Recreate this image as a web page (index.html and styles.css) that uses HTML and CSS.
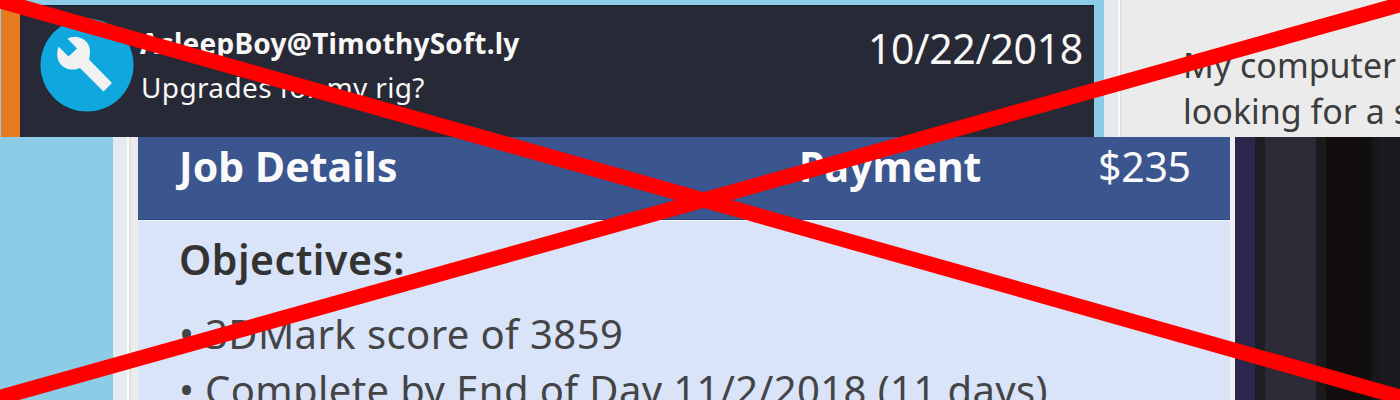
FILE: index.html
```
<!DOCTYPE html>
<html lang="en">
<head>
<meta charset="utf-8">
<title>Job Details</title>
<link rel="stylesheet" href="styles.css">
</head>
<body>
<div class="screen">
  <section class="mail">
    <div class="inbox">
      <article class="message">
        <svg class="avatar" viewBox="0 0 94 94" aria-hidden="true">
          <circle cx="47" cy="47" r="46.5" fill="#0ea8df"/>
          <path fill="#f1f1f2" d="M27.500 20.500C35 17.500 44 19 48 26C50.500 30.500 50.500 36 49 41.500L72 65L63.500 73.500L40 50C32 53.500 23 51 19 44C16.500 39 17 33 18.500 28.500L28.500 38.500L37 30.500Z"/>
        </svg>
        <div class="summary">
          <div class="sender"><span>AsleepBoy@TimothySoft.ly</span></div>
          <div class="subject"><span>Upgrades for my rig?</span></div>
        </div>
        <time class="date">10/22/2018</time>
      </article>
    </div>
    <div class="divider"></div>
    <div class="body-text">
      <div>My computer</div>
      <div>looking for a s</div>
    </div>
  </section>
  <section class="job">
    <div class="backdrop"></div>
    <div class="divider job-divider"></div>
    <div class="panel">
      <header class="job-header">
        <h2 class="job-title">Job Details</h2>
        <strong class="pay-label">Payment</strong>
        <span class="pay">$235</span>
      </header>
      <div class="details">
        <h3 class="objectives">Objectives:</h3>
        <div class="item"><span class="bullet">•</span><span class="score">3DMark score of 3859</span></div>
        <div class="item"><span class="bullet">•</span><span class="due">Complete by End of Day 11/2/2018 (11 days)</span></div>
      </div>
    </div>
    <div class="shadows"></div>
  </section>
  <svg class="cross" viewBox="0 0 1400 400" aria-hidden="true">
    <path d="M-20 -4.700L1420 402.700M-20 403.100L1420 -1.100" stroke="#f00" stroke-width="15.200" fill="none"/>
  </svg>
</div>
</body>
</html>
```
FILE: styles.css
```
* { box-sizing: border-box; }
body { margin: 0; font-family: "Noto Sans", "Open Sans", sans-serif; }
.screen {
  position: relative;
  display: grid;
  grid-template-rows: 136.5px 263.5px;
  width: 1400px;
  height: 400px;
  overflow: hidden;
  white-space: nowrap;
}
.mail { display: flex; overflow: hidden; background: #ebebeb; }
.inbox { flex: 0 0 1104px; padding: 5px 10px 0 1px; background: #8ccce6; }
.message {
  display: flex;
  height: 132px;
  padding-left: 20px;
  border-left: 19px solid #e67c1f;
  border-top: 1px solid #1b1b2b;
  background: #282936;
  color: #f7f7f5;
}
.avatar { flex: none; width: 94px; height: 94px; margin-top: 12px; }
.summary { flex: 1; padding: 15px 0 0 6px; }
.sender { font-size: 28px; line-height: 44px; font-weight: 700; letter-spacing: 0.26px; }
.subject { padding-left: 1px; font-size: 28px; line-height: 44px; letter-spacing: 0.36px; }
.date { font-size: 41px; line-height: 50px; padding: 17px 11px 0 0; letter-spacing: -0.3px; }
.divider {
  flex: 0 0 18px;
  background: linear-gradient(90deg, #e6eaf0 14px, #fafafa 14px 16px, #dfdfdf 16px);
}
.body-text { padding: 42px 0 0 61px; font-size: 34px; line-height: 46px; color: #3c3c3c; }
.job { display: flex; overflow: hidden; background: #d9e4f8; }
.backdrop { flex: 0 0 113px; background: #8ccce6; }
.job-divider {
  flex-basis: 25px;
  background: linear-gradient(90deg, #e6eaf2 14px, #fafafa 14px 16px, #dfdfdf 16px 18px, #ebebeb 18px);
}
.panel { flex: 0 0 1091.500px; }
.job-header {
  display: flex;
  height: 83.500px;
  padding: 1px 39px 0 41px;
  border-bottom: 1px solid #2c4684;
  background: #3b558e;
  color: #fafafa;
  font-size: 41px;
  line-height: 56px;
}
.job-title { margin: 0; font: inherit; font-weight: 700; flex: 0 0 620px; letter-spacing: 0.08px; }
.pay-label { flex: 0 0 299px; }
.pay { letter-spacing: -0.25px; }
.details {
  height: 180px;
  padding: 10px 41px 0;
  border-top: 1px solid #f4f8ff;
  background: #d9e4f8;
  color: #333;
  font-size: 40px;
}
.objectives { margin: 0 0 19px; font-size: 41px; line-height: 56px; font-weight: 600; letter-spacing: 0.52px; }
.item { display: flex; line-height: 56px; color: #444447; letter-spacing: 0.4px; }
.bullet { flex: 0 0 26px; }
.shadows {
  flex: 1;
  background: linear-gradient(90deg, #f0f0f2 5px, #2c274c 5px 25px, #1e1d23 25px 35px, #2c2a36 35px 86px, #1c1a1a 86px 96px, #120e0d 96px 141px, #171819 142px 149px, #1b1b1f 151px 100%);
}
.cross { position: absolute; inset: 0; width: 1400px; height: 400px; }
```
